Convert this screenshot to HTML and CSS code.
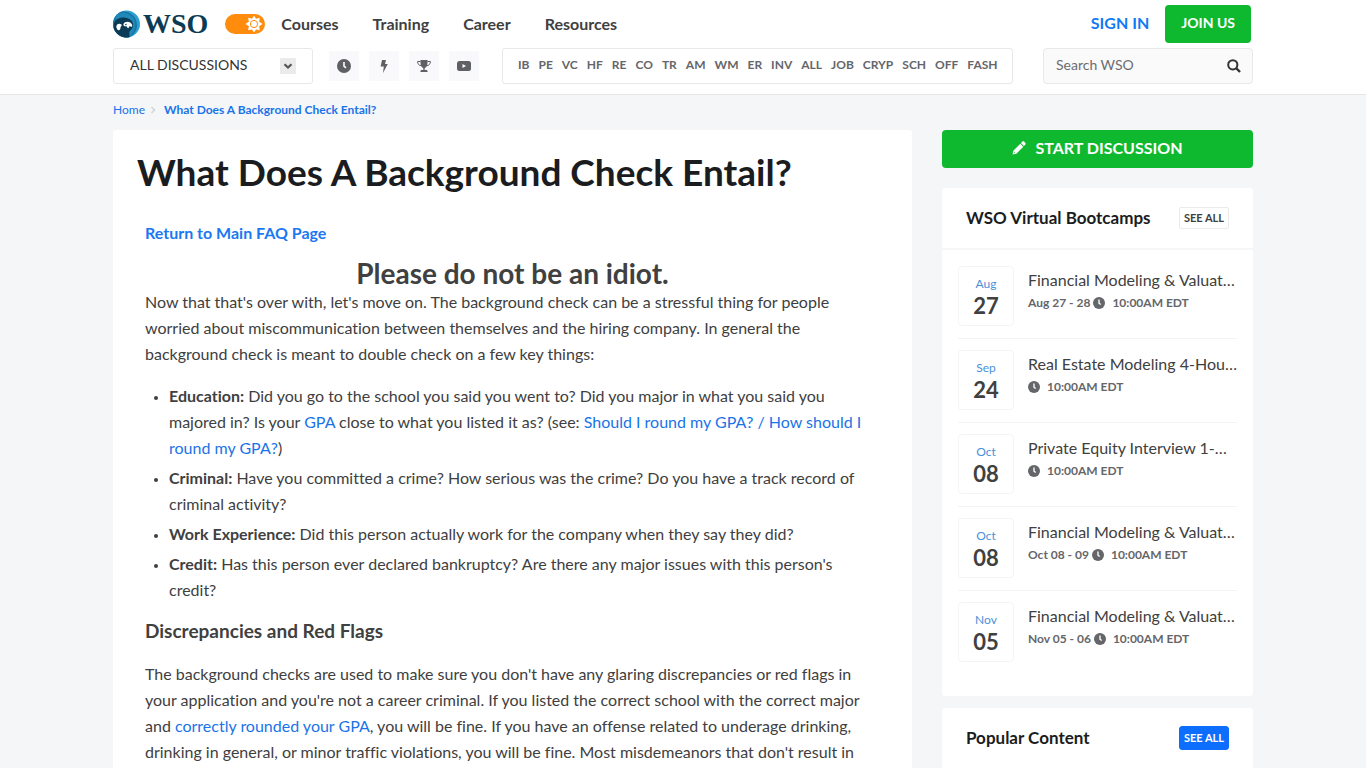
FILE: index.html
```
<!DOCTYPE html>
<html lang="en">
<head>
  <meta charset="UTF-8">
  <meta name="viewport" content="width=device-width, initial-scale=1.0">
  <title>What Does A Background Check Entail? | Wall Street Oasis</title>
  <link rel="stylesheet" href="styles.css">
</head>
<body>
  <svg class="sprite" width="0" height="0" aria-hidden="true">
    <symbol id="clock" viewBox="0 0 14 14">
      <circle cx="7" cy="7" r="7" fill="currentColor"/>
      <path d="M7 3v4.200l2 1.600" fill="none" stroke="#fff" stroke-width="1.600"/>
    </symbol>
  </svg>

  <header class="site-header">
    <div class="container">
      <div class="top-row">
        <a class="logo" href="#" aria-label="WSO">
          <svg class="logo-mark" viewBox="0 0 28 28" width="28" height="28">
            <clipPath id="globe"><circle cx="13.500" cy="14" r="13.500"/></clipPath>
            <g clip-path="url(#globe)">
              <rect width="28" height="28" fill="#2b9fd0"/>
              <circle cx="10.500" cy="15" r="13.500" fill="#1676a6"/>
              <path d="M2 6C9-1 20 4 22 12c1 6-2 11-7 17l-5-2z" fill="#2189ba"/>
              <path d="M1 13C4 6 15 6 19 11c2 4 1 7-1 9-2 1.500-2 3-1 8H0z" fill="#0c3c55"/>
            </g>
            <path d="M3.300 16.500c.2-2 2-3.400 3.900-2.600 1 .3 1.900.6 1.500 1.500-.3.900-1.300 1.100-1.200 2 .1 1.200-.6 2.600-1.600 2.900-1.500-.2-2.600-1.900-2.600-3.800z" fill="#fff"/>
            <path d="M10.500 14c.8-2.200 4.600-3 6.700-1.500 1.700 1 2.400 3 1.900 3.900-.8.700-2.200-.5-2.800.2-.5.600-.4 1.700-1.200 1.700-.8-.2-.7-1.400-1.400-1.800-.8-.5-2.200.2-2.800-.7-.5-.6-.6-1.100-.4-1.800z" fill="#fff"/>
            <path d="M12 14.800l1.800-.6" fill="none" stroke="#0c3c55" stroke-width=".9"/>
          </svg>
          <span class="logo-text">WSO</span>
        </a>
        <button class="theme-toggle" type="button" aria-label="Toggle dark mode">
          <svg viewBox="0 0 18 18" width="18" height="18">
            <path d="M9 .5l2 3.200 3.900-1-.8 3.800L17.500 9l-3.400 2.300.8 4-3.900-.9-2 3.100-2-3.100-3.900.9.800-4L.5 9l3.400-2.500-.8-3.800 3.900 1z" fill="#fff"/>
            <circle cx="9" cy="9" r="3.600" fill="none" stroke="#ff8c0c"/>
          </svg>
        </button>
        <nav class="main-nav">
          <a href="#">Courses</a>
          <a href="#">Training</a>
          <a href="#">Career</a>
          <a href="#">Resources</a>
        </nav>
        <div class="account">
          <a class="sign-in" href="#">SIGN IN</a>
          <button class="btn-green join" type="button">JOIN US</button>
        </div>
      </div>

      <div class="tool-row">
        <div class="forum-select">
          <select aria-label="Forum">
            <option>ALL DISCUSSIONS</option>
          </select>
          <span class="select-arrow">
            <svg viewBox="0 0 10 6" width="10" height="6"><path d="M1.500 1.300L5 4.500l3.500-3.200" fill="none" stroke="#555" stroke-width="2.200"/></svg>
          </span>
        </div>
        <div class="quick-links">
          <a href="#" aria-label="Latest"><svg width="14" height="14"><use href="#clock"/></svg></a>
          <a href="#" aria-label="Hot"><svg viewBox="0 0 14 14" width="14" height="14"><path d="M5 1h4L8 5h2.800L6 14l.8-6.500H3.600z" fill="currentColor"/></svg></a>
          <a href="#" aria-label="Leaderboard"><svg viewBox="0 0 14 14" width="14" height="14"><path d="M3.500 1h7v3c0 3-1.500 4.500-2.800 5v2H9.500c.6 0 1 .6 1 1.200V13h-7v-.8c0-.6.4-1.200 1-1.200h1.800V9C5 8.500 3.500 7 3.500 4z" fill="currentColor"/><path d="M3.500 2.500H.6c0 2.600 1.500 4.200 3.900 4.200M10.500 2.500h2.900c0 2.600-1.500 4.200-3.900 4.200" fill="none" stroke="currentColor"/></svg></a>
          <a href="#" aria-label="Videos"><svg viewBox="0 0 14 14" width="14" height="14"><rect y="2" width="14" height="10" rx="2.500" fill="currentColor"/><path d="M5.500 5v4L9 7z" fill="#fff"/></svg></a>
        </div>
        <nav class="forum-links">
          <a href="#">IB</a>
          <a href="#">PE</a>
          <a href="#">VC</a>
          <a href="#">HF</a>
          <a href="#">RE</a>
          <a href="#">CO</a>
          <a href="#">TR</a>
          <a href="#">AM</a>
          <a href="#">WM</a>
          <a href="#">ER</a>
          <a href="#">INV</a>
          <a href="#">ALL</a>
          <a href="#">JOB</a>
          <a href="#">CRYP</a>
          <a href="#">SCH</a>
          <a href="#">OFF</a>
          <a href="#">FASH</a>
        </nav>
        <form class="search">
          <input type="text" placeholder="Search WSO" aria-label="Search WSO">
          <button type="button" aria-label="Search">
            <svg viewBox="0 0 14 14" width="14" height="14" fill="none" stroke="#333" stroke-width="2"><circle cx="5.800" cy="5.800" r="4.600"/><path d="M9.200 9.200L13 13" stroke-width="2.400"/></svg>
          </button>
        </form>
      </div>
    </div>
  </header>

  <div class="container">
    <nav class="breadcrumb">
      <a href="#">Home</a>
      <svg viewBox="0 0 6 8" width="6" height="8"><path d="M1.500 1l3 3-3 3" fill="none" stroke="#d3d5d8" stroke-width="1.600"/></svg>
      <a class="current" href="#">What Does A Background Check Entail?</a>
    </nav>

    <div class="layout">
      <main class="article">
        <h1>What Does A Background Check Entail?</h1>
        <div class="article-body">
          <p class="return"><a href="#">Return to Main FAQ Page</a></p>
          <h2>Please do not be an idiot.</h2>
          <p>Now that that's over with, let's move on. The background check can be a stressful thing for people worried about miscommunication between themselves and the hiring company. In general the background check is meant to double check on a few key things:</p>
          <ul>
            <li><strong>Education:</strong> Did you go to the school you said you went to? Did you major in what you said you majored in? Is your <a href="#">GPA</a> close to what you listed it as? (see: <a href="#">Should I round my GPA? / How should I round my GPA?</a>)</li>
            <li><strong>Criminal:</strong> Have you committed a crime? How serious was the crime? Do you have a track record of criminal activity?</li>
            <li><strong>Work Experience:</strong> Did this person actually work for the company when they say they did?</li>
            <li><strong>Credit:</strong> Has this person ever declared bankruptcy? Are there any major issues with this person's credit?</li>
          </ul>
          <h3>Discrepancies and Red Flags</h3>
          <p>The background checks are used to make sure you don't have any glaring discrepancies or red flags in your application and you're not a career criminal. If you listed the correct school with the correct major and <a href="#">correctly rounded your GPA</a>, you will be fine. If you have an offense related to underage drinking, drinking in general, or minor traffic violations, you will be fine. Most misdemeanors that don't result in</p>
        </div>
      </main>

      <aside class="sidebar">
        <button class="btn-green start" type="button">
          <svg viewBox="0 0 14 14" width="14" height="14" fill="#fff"><path d="M10.200.8c.6-.6 1.400-.6 2 0l1 1c.6.6.6 1.400 0 2l-1.300 1.300-3-3z"/><path fill-rule="evenodd" d="M8.300 2.700l3 3-7 7L.5 13.500l.8-3.800zM2.300 10.800l-.4 1.300 1.300-.4z"/></svg>
          START DISCUSSION
        </button>

        <section class="panel">
          <div class="panel-head">
            <h4>WSO Virtual Bootcamps</h4>
            <a class="see-all" href="#">SEE ALL</a>
          </div>
          <div class="events">
            <div class="event">
              <div class="date"><span>Aug</span><b>27</b></div>
              <div class="info">
                <a class="event-title" href="#">Financial Modeling &amp; Valuation Bootcamp</a>
                <div class="time">Aug 27 - 28 <svg width="12" height="12"><use href="#clock"/></svg><span>10:00AM EDT</span></div>
              </div>
            </div>
            <div class="event">
              <div class="date"><span>Sep</span><b>24</b></div>
              <div class="info">
                <a class="event-title" href="#">Real Estate Modeling 4-Hour Bootcamp</a>
                <div class="time"><svg width="12" height="12"><use href="#clock"/></svg><span>10:00AM EDT</span></div>
              </div>
            </div>
            <div class="event">
              <div class="date"><span>Oct</span><b>08</b></div>
              <div class="info">
                <a class="event-title" href="#">Private Equity Interview 1-Day Bootcamp</a>
                <div class="time"><svg width="12" height="12"><use href="#clock"/></svg><span>10:00AM EDT</span></div>
              </div>
            </div>
            <div class="event">
              <div class="date"><span>Oct</span><b>08</b></div>
              <div class="info">
                <a class="event-title" href="#">Financial Modeling &amp; Valuation Bootcamp</a>
                <div class="time">Oct 08 - 09 <svg width="12" height="12"><use href="#clock"/></svg><span>10:00AM EDT</span></div>
              </div>
            </div>
            <div class="event">
              <div class="date"><span>Nov</span><b>05</b></div>
              <div class="info">
                <a class="event-title" href="#">Financial Modeling &amp; Valuation Bootcamp</a>
                <div class="time">Nov 05 - 06 <svg width="12" height="12"><use href="#clock"/></svg><span>10:00AM EDT</span></div>
              </div>
            </div>
          </div>
        </section>

        <section class="panel popular">
          <div class="panel-head">
            <h4>Popular Content</h4>
            <a class="see-all blue" href="#">SEE ALL</a>
          </div>
        </section>
      </aside>
    </div>
  </div>
</body>
</html>
```

FILE: styles.css
```
* {
  box-sizing: border-box;
}
body {
  margin: 0;
  background-color: #f4f6f8;
  font-family: Lato, sans-serif;
  font-size: 16px;
  line-height: 26px;
  font-variant-ligatures: none;
  color: #404040;
}
a {
  color: #1a73e8;
  text-decoration: none;
}
button {
  font-family: inherit;
  border: none;
  cursor: pointer;
}
h1, h2, h3, h4, p {
  margin: 0;
}
svg {
  flex-shrink: 0;
}
.sprite {
  position: absolute;
}
.container {
  max-width: 1140px;
  margin: 0 auto;
}

/* Header */
.site-header {
  height: 95px;
  background-color: #fff;
  border-bottom: 1px solid #e4e6e8;
}
.top-row {
  display: flex;
  align-items: center;
  height: 48px;
}
.logo {
  display: flex;
  align-items: center;
  gap: 2px;
}
.logo-text {
  font-family: "Liberation Serif", serif;
  font-size: 28px;
  font-weight: bold;
  color: #0c3c55;
}
.theme-toggle {
  display: flex;
  align-items: center;
  justify-content: flex-end;
  width: 40px;
  height: 20px;
  margin-left: 17px;
  padding: 0 2px;
  border-radius: 10px;
  background-color: #ff8c0c;
}
.main-nav {
  display: flex;
  gap: 34px;
  margin-left: 16px;
}
.main-nav a {
  font-weight: bold;
  color: #404040;
}
.account {
  display: flex;
  align-items: center;
  gap: 16px;
  margin-left: auto;
  padding-right: 2px;
}
.sign-in {
  padding-bottom: 2px;
  font-weight: bold;
  color: #0f7af5;
}
.btn-green {
  background-color: #0fb92f;
  color: #fff;
  font-weight: bold;
  border-radius: 4px;
  height: 38px;
}
.join {
  padding: 0 16px 4px;
  font-size: 14px;
}
.tool-row {
  display: flex;
  align-items: center;
}
.forum-select {
  position: relative;
  width: 200px;
}
.forum-select select {
  appearance: none;
  width: 100%;
  height: 36px;
  padding: 0 16px 3px;
  border: 1px solid #e8e8e8;
  border-radius: 3px;
  background-color: #fff;
  font-family: inherit;
  font-size: 14px;
  color: #333;
}
.select-arrow {
  position: absolute;
  top: 10px;
  right: 17px;
  display: flex;
  align-items: center;
  justify-content: center;
  width: 16px;
  height: 16px;
  background-color: #ebebeb;
  pointer-events: none;
}
.quick-links {
  display: flex;
  gap: 10px;
  margin-left: 16px;
}
.quick-links a {
  display: flex;
  align-items: center;
  justify-content: center;
  width: 30px;
  height: 30px;
  background-color: #f9f9fb;
  color: #5f6064;
}
.forum-links {
  display: flex;
  gap: 9px;
  height: 36px;
  margin-left: 23px;
  padding: 0 14px 2px 15px;
  align-items: center;
  border: 1px solid #e8e8e8;
  border-radius: 3px;
}
.forum-links a {
  font-size: 12px;
  font-weight: bold;
  color: #65666a;
}
.search {
  display: flex;
  width: 210px;
  height: 36px;
  margin-left: auto;
  border: 1px solid #e8e8e8;
  border-radius: 4px;
  background-color: #fafafa;
}
.search input {
  flex: 1;
  min-width: 0;
  padding: 0 12px 3px;
  border: none;
  background: none;
  font-family: inherit;
  font-size: 14px;
}
.search input::placeholder {
  color: #6c6d70;
}
.search button {
  display: flex;
  align-items: center;
  padding: 0 11px;
  background: none;
}

/* Breadcrumb */
.breadcrumb {
  display: flex;
  align-items: center;
  height: 35px;
  padding-bottom: 5px;
  gap: 5px;
  font-size: 12px;
}
.breadcrumb .current {
  margin-left: 3px;
  font-weight: bold;
}

/* Article */
.layout {
  display: grid;
  grid-template-columns: minmax(0, 1fr) 311px;
  gap: 30px;
}
.article {
  padding: 20px 24px 24px;
  border-radius: 3px;
  background-color: #fff;
}
.article h1 {
  font-size: 37px;
  line-height: 44px;
  font-weight: bold;
  color: #1b1c20;
}
.article-body {
  padding: 26px 8px 0;
}
.return {
  font-weight: bold;
}
.return a {
  color: #1a78f2;
}
.article h2 {
  margin-top: 11px;
  font-size: 28px;
  line-height: 32px;
  text-align: center;
}
.article ul {
  margin: 16px 0 14px;
  padding-left: 24px;
}
.article li {
  margin-bottom: 4px;
}
.article li::marker {
  font-size: 12px;
}
.article h3 {
  margin-bottom: 16px;
  font-size: 19px;
  line-height: 28px;
}

/* Sidebar */
.start {
  display: flex;
  align-items: center;
  justify-content: center;
  gap: 9px;
  width: 100%;
  padding-bottom: 4px;
  font-size: 16px;
}
.panel {
  margin-top: 20px;
  border-radius: 3px;
  background-color: #fff;
}
.panel.popular {
  margin-top: 12px;
}
.panel-head {
  display: flex;
  align-items: center;
  justify-content: space-between;
  height: 62px;
  padding: 0 24px;
  border-bottom: 2px solid #f4f6f8;
}
.panel-head h4 {
  font-size: 17px;
  color: #1b1c20;
}
.see-all {
  padding: 0 4px;
  border: 1px solid #ebebeb;
  border-radius: 2px;
  font-size: 11px;
  line-height: 20px;
  font-weight: bold;
  color: #404040;
}
.see-all.blue {
  border-color: #0d6efd;
  border-radius: 3px;
  line-height: 22px;
  background-color: #0d6efd;
  color: #fff;
}
.events {
  padding: 0 16px 22px;
}
.event {
  display: flex;
  gap: 14px;
  height: 84px;
  padding-top: 11px;
  border-top: 1px solid #f4f4f6;
}
.event:first-child {
  height: 88px;
  padding-top: 16px;
  border-top: none;
}
.date {
  display: flex;
  flex-direction: column;
  align-items: center;
  flex-shrink: 0;
  width: 56px;
  height: 60px;
  padding-top: 8px;
  border: 1px solid #f4f4f6;
  border-radius: 4px;
}
.date span {
  font-size: 12px;
  line-height: 18px;
  color: #4a90d9;
}
.date b {
  font-size: 22px;
  line-height: 26px;
}
.info {
  min-width: 0;
}
.event-title {
  display: block;
  overflow: hidden;
  text-overflow: ellipsis;
  white-space: nowrap;
  line-height: 28px;
  color: #404040;
}
.time {
  display: flex;
  align-items: center;
  gap: 3px;
  margin-top: 1px;
  font-size: 12px;
  line-height: 16px;
  font-weight: bold;
  color: #65666a;
}
.time span {
  margin-left: 4px;
}
```
